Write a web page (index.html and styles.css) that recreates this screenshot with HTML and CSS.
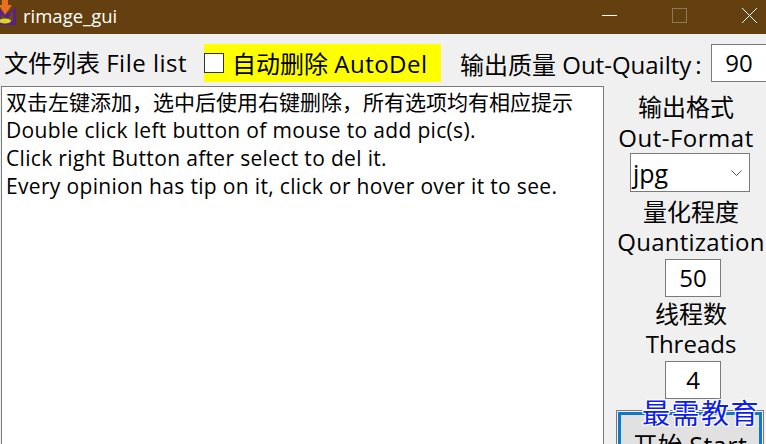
FILE: index.html
```html
<!DOCTYPE html>
<html lang="zh-CN">
<head>
<meta charset="utf-8">
<title>rimage_gui</title>
<link rel="stylesheet" href="styles.css">
</head>
<body>
<div class="window">
  <header class="titlebar">
    <svg class="app-icon" width="18" height="26" viewBox="0 0 18 26">
      <path d="M0 9 L6 13 L11 13 L17 7 L17 25 L0 25 Z" fill="#5a1f8c"/>
      <path d="M2 14 L8 19 L14 11 L14 21 L2 21 Z" fill="#6a4a18"/>
      <path d="M3 0 H9 V5 H13 L6 15 L0 5 H3 Z" fill="#e8701c"/>
      <ellipse cx="6" cy="21" rx="6" ry="2.5" fill="#d8d820"/>
    </svg>
    <span class="title">rimage_gui</span>
    <div class="controls">
      <svg class="ctl" width="15" height="15" viewBox="0 0 15 15"><path d="M0 7.5 H15" stroke="#fff" fill="none"/></svg>
      <svg class="ctl" width="15" height="15" viewBox="0 0 15 15"><rect x="0.5" y="0.5" width="14" height="14" stroke="#8f7853" fill="none"/></svg>
      <svg class="ctl" width="15" height="15" viewBox="0 0 15 15"><path d="M0 0 L15 15 M15 0 L0 15" stroke="#fff" fill="none"/></svg>
    </div>
  </header>
  <div class="toolbar">
    <span class="file-label">文件列表 <span class="wide">File list</span></span>
    <label class="autodel"><span class="check"></span><span class="autodel-text">自动删除 <span class="wide">AutoDel</span></span></label>
    <span class="quality-label">输出质量 Out-Quailty<span class="colon">:</span></span>
    <div class="field quality-field">90</div>
  </div>
  <main class="content">
    <div class="listbox">
      <div>双击左键添加&#xFF0C;选中后使用右键删除&#xFF0C;所有选项均有相应提示</div>
      <div class="latin">Double click left button of mouse to add pic(s).</div>
      <div class="latin">Click right Button after select to del it.</div>
      <div class="latin">Every opinion has tip on it, click or hover over it to see.</div>
    </div>
    <aside class="side">
      <div class="side-label first shifted">输出格式</div>
      <div class="side-label shifted wide">Out-Format</div>
      <div class="select">
        <span>jpg</span>
        <svg width="11" height="6" viewBox="0 0 11 6"><path d="M0.5 0.5 L5.5 5.5 L10.5 0.5" stroke="#555" fill="none"/></svg>
      </div>
      <div class="side-label after-select">量化程度</div>
      <div class="side-label quant">Quantization</div>
      <div class="field small-field">50</div>
      <div class="side-label">线程数</div>
      <div class="side-label">Threads</div>
      <div class="field small-field">4</div>
      <div class="start-frame">
        <button class="start">开始 <span class="wide">Start</span></button>
      </div>
    </aside>
  </main>
  <div class="watermark">最需教育</div>
</div>
</body>
</html>
```
FILE: styles.css
```css
* { box-sizing: border-box; }
html, body { margin: 0; padding: 0; overflow: hidden; }
body {
  width: 766px; height: 444px;
  background: #f0f0f0; color: #000;
  font-family: "Open Sans", "Noto Sans CJK SC", sans-serif;
  font-size: 24px;
}
.window { position: relative; width: 766px; height: 444px; overflow: hidden; display: flex; flex-direction: column; }
.titlebar { height: 34px; flex: none; background: #643f10; color: #fff; display: flex; align-items: center; overflow: hidden; }
.app-icon { flex: none; margin-left: -1px; margin-top: -8px; }
.title { font-size: 18.5px; margin-left: 6px; margin-top: -3px; }
.controls { margin-left: auto; display: flex; gap: 55px; padding-right: 9px; margin-top: -3px; }
.ctl { display: block; }
.wide { letter-spacing: 0.5px; }
.toolbar { height: 52px; flex: none; display: flex; align-items: center; padding: 6px 0 0 4px; font-size: 24px; white-space: nowrap; }
.file-label { width: 200px; flex: none; margin-top: -3px; }
.autodel { width: 237px; height: 38px; flex: none; background: #ffff00; display: flex; align-items: center; white-space: pre; }
.autodel-text { margin-top: -2px; }
.check { width: 20px; height: 20px; background: #fff; border: 1px solid #333; margin-right: 8px; flex: none; }
.quality-label { margin-left: 19px; width: 251px; flex: none; }
.colon { margin-left: 4px; }
.field { background: #fff; border: 1px solid #7a7a7a; text-align: center; }
.quality-field { width: 56px; height: 38px; flex: none; line-height: 35px; font-size: 24px; margin-top: -1px; }
.content { flex: 1; display: flex; min-height: 0; }
.listbox { width: 603px; margin-left: 1px; background: #fff; border: 1px solid #7a7a7a; padding: 1px 4px; font-size: 21px; line-height: 28px; white-space: nowrap; height: 400px; overflow: hidden; }
.latin { letter-spacing: 0.33px; }
.side { flex: 1; display: flex; flex-direction: column; align-items: center; white-space: nowrap; min-width: 0; padding-left: 12px; }
.side-label { height: 30px; line-height: 30px; font-size: 24px; text-align: center; }
.shifted { margin-right: 10px; height: 31px; line-height: 31px; }
.quant { letter-spacing: 0.25px; }
.first { margin-top: 5px; }
.select { width: 120px; height: 39px; flex: none; margin-right: 2px; background: #fff; border: 1px solid #7a7a7a; display: flex; align-items: center; justify-content: space-between; padding: 0 7px 0 2px; font-size: 25px; }
.after-select { margin-top: 5px; }
.small-field { width: 56px; height: 38px; flex: none; margin: 2px 0 2px 4px; line-height: 36px; font-size: 24px; }
.start-frame { width: 148px; height: 60px; flex: none; margin: 9px 0 0 -2px; padding: 1px; border: 1px solid #7a7a7a; }
.start { display: block; width: 100%; height: 60px; background: #e1e1e1; border: 3px solid #0f78c8; font: inherit; font-size: 25px; padding: 0; line-height: 60px; color: #000; }
.watermark { position: absolute; left: 642px; top: 393px; font-family: "Noto Sans CJK SC", serif; font-size: 28px; line-height: 38px; letter-spacing: 1.5px; color: #0b1cf0; text-shadow: 1px 0 0 #fff, -1px 0 0 #fff, 0 1px 0 #fff, 0 -1px 0 #fff, 1px 1px 0 #fff, -1px -1px 0 #fff, 1px -1px 0 #fff, -1px 1px 0 #fff; white-space: nowrap; }
```
